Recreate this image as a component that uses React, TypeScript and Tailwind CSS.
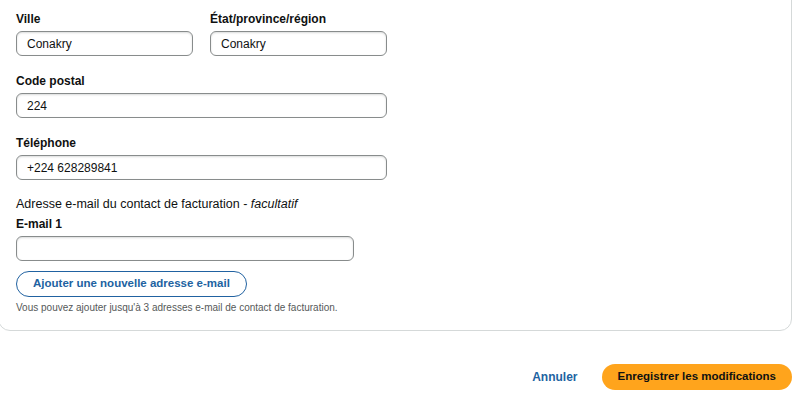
import React from 'react';

const font = { fontFamily: '"Liberation Sans", Arial, sans-serif' };

interface FieldProps {
  label: string;
  value?: string;
  className?: string;
}

const Field: React.FC<FieldProps> = ({ label, value = '', className = '' }) => (
  <div className={`flex flex-col ${className}`}>
    <label className="text-[12px] font-bold leading-[17px] text-[#0f1111] mb-[3px]">{label}</label>
    <input
      readOnly
      value={value}
      className="h-[25px] rounded-[6px] border border-[#888c8c] px-[10px] text-[12px] text-[#0f1111] outline-none shadow-[inset_0_1px_2px_rgba(15,17,17,0.15)]"
    />
  </div>
);

export default function App() {
  return (
    <div className="w-[800px] h-[409px] overflow-hidden bg-white" style={font}>
      <div className="-mt-[20px] -ml-[2px] w-[794px] rounded-[12px] border border-[#d5d9d9] pl-[17px] pt-[30px] pb-[15px]">
        <div className="flex gap-[17px]">
          <Field label="Ville" value="Conakry" className="w-[177px]" />
          <Field label="État/province/région" value="Conakry" className="w-[177px]" />
        </div>
        <Field label="Code postal" value="224" className="w-[371px] mt-[17px]" />
        <Field label="Téléphone" value="+224 628289841" className="w-[371px] mt-[17px]" />
        <p className="mt-[15px] text-[12.5px] leading-[19px] text-[#0f1111]">
          Adresse e-mail du contact de facturation - <i>facultatif</i>
        </p>
        <Field label="E-mail 1" className="w-[338px] mt-[2px]" />
        <button className="mt-[10px] h-[26px] rounded-full border-[1.5px] border-[#2162a1] px-[16px] text-[11.5px] font-bold text-[#2162a1]">
          Ajouter une nouvelle adresse e-mail
        </button>
        <p className="mt-[4px] text-[10px] leading-[14px] text-[#565959]">
          Vous pouvez ajouter jusqu'à 3 adresses e-mail de contact de facturation.
        </p>
      </div>
      <div className="flex justify-end items-center gap-[24px] pr-[8px] mt-[33px]">
        <button className="text-[12px] font-bold text-[#2162a1]">Annuler</button>
        <button className="h-[26px] rounded-full bg-[#ffa41c] px-[16px] text-[11.5px] font-bold text-[#0f1111]">
          Enregistrer les modifications
        </button>
      </div>
    </div>
  );
}
